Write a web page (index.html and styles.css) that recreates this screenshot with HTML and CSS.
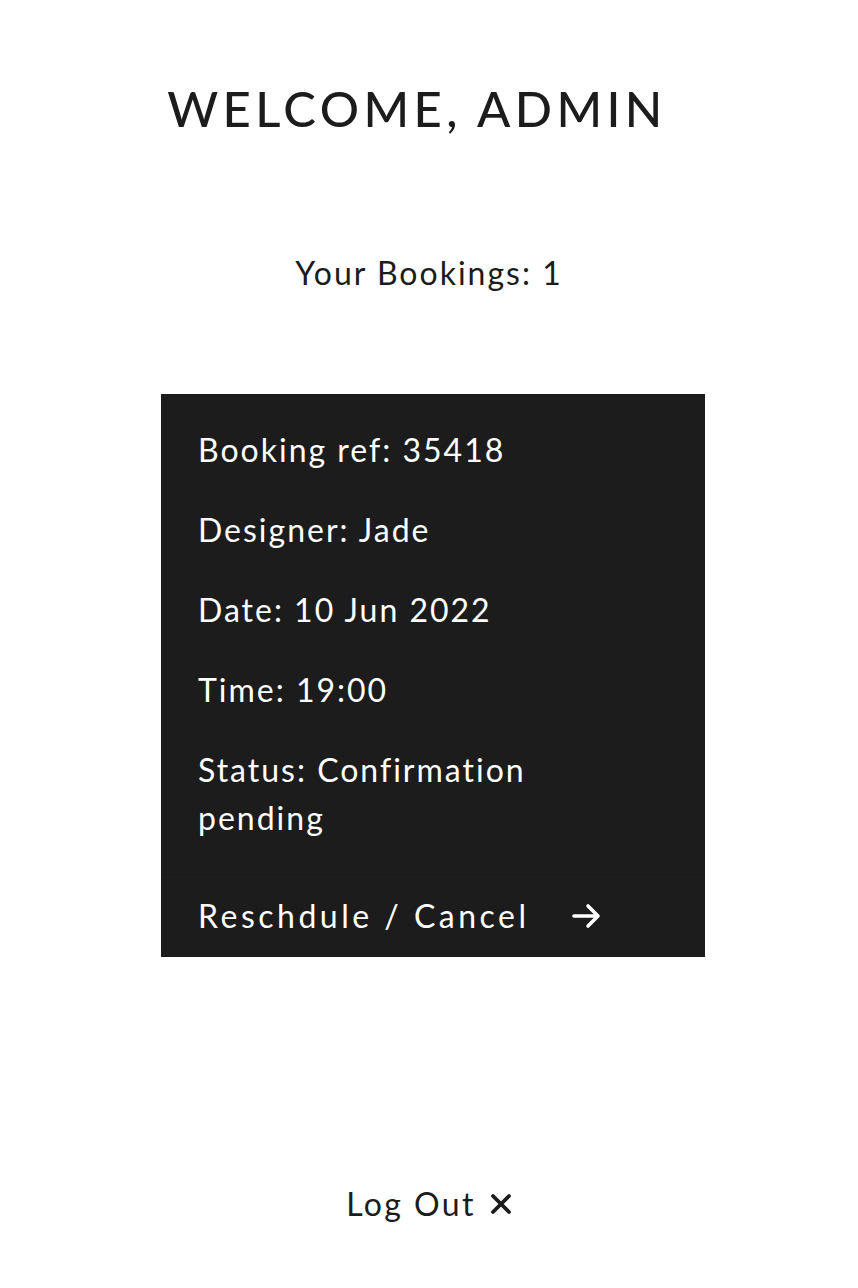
FILE: index.html
```html
<!DOCTYPE html>
<html lang="en">
<head>
<meta charset="utf-8">
<title>Welcome, Admin</title>
<link rel="stylesheet" href="styles.css">
</head>
<body>
<main class="page">
  <h1 class="title">WELCOME, ADMIN</h1>
  <p class="count">Your Bookings: 1</p>
  <section class="card">
    <div class="card-body">
      <p class="row">Booking ref: 35418</p>
      <p class="row">Designer: Jade</p>
      <p class="row">Date: 10 Jun 2022</p>
      <p class="row">Time: 19:00</p>
      <p class="row">Status: Confirmation<br>pending</p>
    </div>
    <a class="card-footer" href="#">
      <span>Reschdule / Cancel</span>
      <svg class="arrow" width="30" height="26" viewBox="0 0 30 26" aria-hidden="true">
        <path d="M2 13 H26 M16 3 L26 13 L16 23" fill="none" stroke="#fff" stroke-width="3.6" stroke-linecap="round" stroke-linejoin="round"/>
      </svg>
    </a>
  </section>
  <a class="logout" href="#">
    <span>Log Out</span>
    <svg class="cross" width="22" height="22" viewBox="0 0 22 22" aria-hidden="true">
      <path d="M3 3 L19 19 M19 3 L3 19" fill="none" stroke="#1c1c1c" stroke-width="3.8" stroke-linecap="round"/>
    </svg>
  </a>
</main>
</body>
</html>
```

FILE: styles.css
```css
html, body {
  margin: 0;
  padding: 0;
  background: #ffffff;
}

body {
  font-family: Lato, "Open Sans", sans-serif;
  color: #1c1c1c;
}

.page {
  display: flex;
  flex-direction: column;
  align-items: center;
  padding-top: 76px;
}

.title {
  margin: 0;
  font-size: 49px;
  font-weight: 500;
  line-height: 64px;
  letter-spacing: 4.4px;
  margin-left: -24px;
}

.count {
  margin: 109px 0 0;
  font-size: 32px;
  line-height: 48px;
  letter-spacing: 2px;
}

.card {
  margin-top: 97px;
  width: 544px;
  margin-left: 8px;
  background: #1c1c1c;
  color: #ffffff;
  display: flex;
  flex-direction: column;
}

.card-body {
  display: flex;
  flex-direction: column;
  gap: 32px;
  padding: 32px 37px;
}

.row {
  margin: 0;
  font-size: 32px;
  line-height: 48px;
  letter-spacing: 2px;
}

.card-footer {
  display: flex;
  align-items: center;
  gap: 42px;
  padding: 17px 37px;
  border-top: 1px solid #191919;
  color: #ffffff;
  text-decoration: none;
  font-size: 32px;
  line-height: 48px;
  letter-spacing: 3.5px;
}

.logout {
  margin-top: 223px;
  display: flex;
  align-items: center;
  gap: 14px;
  color: #1c1c1c;
  text-decoration: none;
  font-size: 32px;
  line-height: 48px;
  letter-spacing: 2.4px;
}
```
